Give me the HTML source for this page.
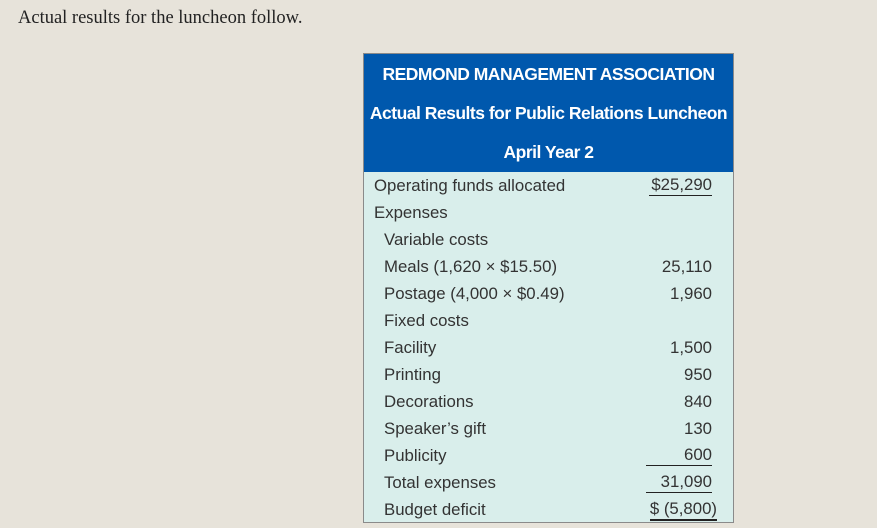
<!DOCTYPE html>
<html><head><meta charset="utf-8"><style>
body{margin:0;width:877px;height:528px;background:#e7e3da;position:relative;overflow:hidden;font-family:"Liberation Sans",sans-serif}
.intro{position:absolute;left:18px;top:8px;font-family:"Liberation Serif",serif;font-size:18.5px;color:#222}
.tbl{position:absolute;left:363px;top:53px;width:369px;height:468px;border:1px solid #8a8a8a;background:#d9eeeb}
.hd{background:#0058ad;height:118px;color:#fff;font-weight:bold;font-size:17.5px;text-align:center;letter-spacing:-0.5px}
.hd div{height:39px;line-height:40px}
.r{position:absolute;left:0;width:369px;height:27px;line-height:27px;font-size:16.8px;color:#333}
.l{position:absolute;left:10px}
.l2{left:20px}
.v{position:absolute;right:21px}
.u{border-bottom:1px solid #222;line-height:21px;top:2px}
</style></head><body>
<div class="intro">Actual results for the luncheon follow.</div>
<div class="tbl">
<div class="hd"><div>REDMOND MANAGEMENT ASSOCIATION</div><div>Actual Results for Public Relations Luncheon</div><div>April Year 2</div></div>
<div class="r" style="top:118px"><span class="l">Operating funds allocated</span><span class="v u" style="padding-left:2px">$25,290</span></div>
<div class="r" style="top:145px"><span class="l">Expenses</span></div>
<div class="r" style="top:172px"><span class="l l2">Variable costs</span></div>
<div class="r" style="top:199px"><span class="l l2">Meals (1,620 × $15.50)</span><span class="v">25,110</span></div>
<div class="r" style="top:226px"><span class="l l2">Postage (4,000 × $0.49)</span><span class="v">1,960</span></div>
<div class="r" style="top:253px"><span class="l l2">Fixed costs</span></div>
<div class="r" style="top:280px"><span class="l l2">Facility</span><span class="v">1,500</span></div>
<div class="r" style="top:307px"><span class="l l2">Printing</span><span class="v">950</span></div>
<div class="r" style="top:334px"><span class="l l2">Decorations</span><span class="v">840</span></div>
<div class="r" style="top:361px"><span class="l l2">Speaker’s gift</span><span class="v">130</span></div>
<div class="r" style="top:388px"><span class="l l2">Publicity</span><span class="v u" style="width:66px;text-align:right">600</span></div>
<div class="r" style="top:415px"><span class="l l2">Total expenses</span><span class="v u" style="width:66px;text-align:right">31,090</span></div>
<div class="r" style="top:442px"><span class="l l2">Budget deficit</span><span class="v u" style="right:16px;border-bottom-width:2px">$ (5,800)</span></div>
</div>
</body></html>
